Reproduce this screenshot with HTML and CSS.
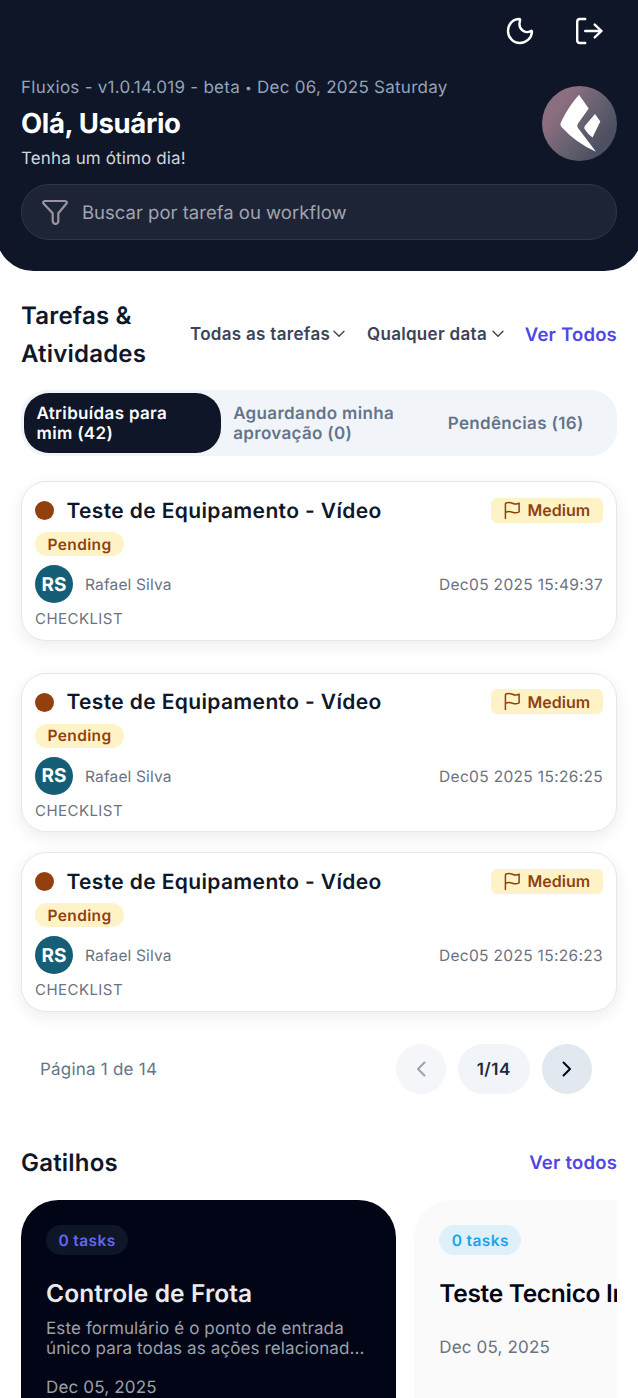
FILE: index.html
```html
<!DOCTYPE html>
<html lang="pt-BR">
<head>
<meta charset="utf-8">
<title>Fluxios</title>
<link rel="stylesheet" href="styles.css">
</head>
<body>
<svg class="defs" width="0" height="0">
  <defs>
    <symbol id="flag" viewBox="0 0 18 20"><path d="M1.500 18.500V3.200C1.500 2.300 3.500 1.500 5.300 1.500C8.200 1.500 9.500 3.200 12.200 3.200C13.700 3.200 14.700 2.600 16 2.200V11.400C14.700 12.200 13.700 12.500 12.200 12.500C9.500 12.500 8.200 11 5.300 11C3.700 11 2.500 11.500 1.500 12"/></symbol>
    <symbol id="down" viewBox="0 0 12 8"><path d="M1 1.200L6 6.200L11 1.200"/></symbol>
  </defs>
</svg>
<header class="hero">
  <nav class="actions">
    <svg class="moon" viewBox="0 0 30 30"><path d="M14.300 3C7.500 3 3 8.600 3 14.900C3 21.500 8.100 27 14.900 27C21.400 27 26.600 22 27 15.600C26.900 14.800 26.400 14.500 25.600 15C20 18.200 12.700 13.200 14.900 5.200C15.200 4.100 15.500 3.100 14.300 3Z"/></svg>
    <svg class="logout" viewBox="0 0 30 30"><path d="M11.200 3H6C4.200 3 3.200 4 3.200 5.800V24.200C3.200 26 4.200 27 6 27H11.200M11.200 15H27.500M20.700 8.600L27.500 15L20.700 21.400"/></svg>
  </nav>
  <div class="greeting">
    <div>
      <p class="meta">Fluxios - v1.0.14.019 - beta <span class="bullet">•</span> Dec 06, 2025 Saturday</p>
      <h1 class="hello">Olá, Usuário</h1>
      <p class="wish">Tenha um ótimo dia!</p>
    </div>
    <svg class="brand" viewBox="0 0 75 75">
      <defs><linearGradient id="g" x1="0.1" y1="0.15" x2="0.85" y2="0.7"><stop offset="0.2" stop-color="#8b6e80"/><stop offset="0.65" stop-color="#64606f"/><stop offset="1" stop-color="#4c5060"/></linearGradient></defs>
      <circle cx="37.500" cy="37.500" r="37.500" fill="url(#g)"/>
      <path fill="#fff" d="M37 8.700L46.700 22.400L36 37.500Q34.600 39.500 36 42L54 65.700Q34 57 19.500 41Q17.700 39 18.800 36.500Q26 21 37 8.700ZM53 28L58.300 35.500L50.500 51.500Q46 48.500 42.600 43Q41.700 41.800 42.800 40Z"/>
    </svg>
  </div>
  <label class="search">
    <svg viewBox="0 0 30 30"><path d="M5 4H25C26.800 4 27.500 5.500 26.300 6.800L18.300 16.200V24C18.300 26 16.800 27 15.300 26.800C13.600 26.500 12.700 25.500 12.700 24V16.200L3.700 6.800C2.500 5.500 3.200 4 5 4Z"/></svg>
    <span>Buscar por tarefa ou workflow</span>
  </label>
</header>
<main>
  <section class="tasks-head">
    <h2 class="heading">Tarefas &amp;<br>Atividades</h2>
    <button class="filter f1">Todas as tarefas<svg><use href="#down"/></svg></button>
    <button class="filter f2">Qualquer data<svg><use href="#down"/></svg></button>
    <a class="more">Ver Todos</a>
  </section>
  <div class="tabs">
    <div class="tab active">Atribuídas para<br>mim (42)</div>
    <div class="tab">Aguardando minha<br>aprovação (0)</div>
    <div class="tab centered">Pendências (16)</div>
  </div>
  <section class="list">
    <article class="card first">
      <div class="row title-row"><i class="dot"></i><h3>Teste de Equipamento - Vídeo</h3><span class="priority"><svg><use href="#flag"/></svg>Medium</span></div>
      <span class="status">Pending</span>
      <div class="row person"><b class="avatar">RS</b><span class="name">Rafael Silva</span><time>Dec05 2025 15:49:37</time></div>
      <p class="kind">CHECKLIST</p>
    </article>
    <article class="card">
      <div class="row title-row"><i class="dot"></i><h3>Teste de Equipamento - Vídeo</h3><span class="priority"><svg><use href="#flag"/></svg>Medium</span></div>
      <span class="status">Pending</span>
      <div class="row person"><b class="avatar">RS</b><span class="name">Rafael Silva</span><time>Dec05 2025 15:26:25</time></div>
      <p class="kind">CHECKLIST</p>
    </article>
    <article class="card">
      <div class="row title-row"><i class="dot"></i><h3>Teste de Equipamento - Vídeo</h3><span class="priority"><svg><use href="#flag"/></svg>Medium</span></div>
      <span class="status">Pending</span>
      <div class="row person"><b class="avatar">RS</b><span class="name">Rafael Silva</span><time>Dec05 2025 15:26:23</time></div>
      <p class="kind">CHECKLIST</p>
    </article>
  </section>
  <div class="pager">
    <span class="page-label">Página 1 de 14</span>
    <button class="step off"><svg viewBox="0 0 10 16"><path d="M8.500 1.500L2 8L8.500 14.500"/></svg></button>
    <span class="count">1/14</span>
    <button class="step"><svg viewBox="0 0 10 16"><path d="M1.500 1.500L8 8L1.500 14.500"/></svg></button>
  </div>
  <section class="triggers-head">
    <h2 class="heading">Gatilhos</h2>
    <a class="more">Ver todos</a>
  </section>
  <section class="triggers">
    <article class="trigger dark">
      <span class="badge">0 tasks</span>
      <h3>Controle de Frota</h3>
      <p class="desc">Este formulário é o ponto de entrada<br>único para todas as ações relacionad...</p>
      <p class="date">Dec 05, 2025</p>
    </article>
    <article class="trigger light">
      <span class="badge">0 tasks</span>
      <h3>Teste Tecnico In</h3>
      <p class="date">Dec 05, 2025</p>
    </article>
  </section>
</main>
</body>
</html>
```
FILE: styles.css
```css
* { box-sizing: border-box; margin: 0; padding: 0; }
html, body { width: 638px; height: 1398px; overflow: hidden; }
body { background: #fff; color: #0f172a; font-family: Inter, "Liberation Sans", sans-serif; text-rendering: geometricPrecision; }
svg { fill: none; stroke: currentColor; stroke-linecap: round; stroke-linejoin: round; flex: none; }
button { border: 0; background: none; font: inherit; color: inherit; }
.defs { position: absolute; }

.hero { height: 271px; margin: 0 -4px; padding: 0 25px; background: #0e1628; border-radius: 0 0 37.5px 37.5px; color: #fff; }
.actions { height: 75.5px; display: flex; justify-content: flex-end; gap: 38.500px; padding: 16px 13.500px 0 0; }
.actions svg { width: 30px; height: 30px; stroke-width: 2.4; }
.greeting { height: 96px; display: flex; justify-content: space-between; align-items: center; }
.meta { padding-top: 1px; font-size: 17px; line-height: 25px; letter-spacing: .26px; color: #94a3b8; white-space: nowrap; }
.bullet { font-size: 12px; vertical-align: 1px; line-height: 1; }
.hello { font-size: 27.500px; line-height: 44px; font-weight: 700; letter-spacing: -.35px; }
.wish { padding-top: 1px; font-size: 17px; line-height: 26px; letter-spacing: .12px; color: #d1d5db; }
.brand { width: 75px; height: 75px; stroke: none; }
.search { margin-top: 12.500px; height: 56px; padding-left: 18px; display: flex; align-items: center; gap: 12px; border: 1.500px solid #2f3748; border-radius: 28px; background: #1c2436; color: #a0a4b0; font-size: 18.500px; }
.search span { padding-top: 2px; }
.search svg { width: 30px; height: 30px; stroke-width: 2.200; color: #9a95a4; }

main { padding: 0 21px; }
.tasks-head { display: flex; align-items: center; height: 75px; margin-top: 26px; white-space: nowrap; }
.heading { font-size: 24px; line-height: 37.500px; font-weight: 600; letter-spacing: .2px; color: #0f172a; }
.tasks-head .heading { width: 169px; }
.filter { display: flex; align-items: center; justify-content: space-between; font-size: 17px; font-weight: 600; letter-spacing: .3px; color: #3b4458; padding-bottom: 1px; }
.filter svg { width: 12px; height: 8px; stroke-width: 1.400; }
.f1 { width: 155px; margin-right: 22px; }
.f2 { width: 137px; }
.more { margin-left: auto; font-size: 18.500px; font-weight: 600; letter-spacing: .2px; color: #4f46e5; }

.tabs { display: grid; grid-template-columns: repeat(3, 1fr); height: 66px; margin-top: 18px; padding: 3px; border-radius: 26px; background: #f1f5f9; white-space: nowrap; }
.tab { height: 60px; display: flex; align-items: center; padding: 2px 0 0 12.500px; border-radius: 25px; font-size: 17px; line-height: 20px; font-weight: 600; letter-spacing: .33px; color: #64748b; }
.tab.active { height: 59.500px; background: #0e1628; color: #fff; }
.tab.centered { padding: 2px 0 0; justify-content: center; }

.list { display: flex; flex-direction: column; gap: 20px; margin-top: 25px; }
.card { height: 159.500px; padding: 13px 13px 0; border: 1.500px solid #e5e7eb; border-radius: 25px; background: #fff; box-shadow: 0 5px 16px rgba(15, 23, 42, .08); }
.card.first { margin-bottom: 12px; }
.row { display: flex; align-items: center; white-space: nowrap; }
.title-row { height: 31px; }
.dot { width: 19px; height: 19px; border-radius: 50%; background: #92400e; margin-right: 12.500px; }
.card h3 { padding-top: 1.500px; font-size: 21px; font-weight: 600; letter-spacing: .36px; }
.priority { margin: -1px 0 0 auto; width: 112.500px; height: 25px; display: flex; align-items: center; gap: 7px; padding-left: 13px; border-radius: 6px; background: #fef3c7; color: #92400e; font-size: 16px; font-weight: 600; }
.priority svg { width: 17px; height: 19px; stroke-width: 1.600; }
.status { display: flex; width: 89px; height: 24px; margin-top: 6px; align-items: center; justify-content: center; border-radius: 12px; background: #fef3c7; color: #92400e; font-size: 15.500px; font-weight: 600; letter-spacing: .35px; }
.person { height: 38px; margin-top: 9px; color: #6b7280; font-size: 15.500px; letter-spacing: .15px; }
.avatar { width: 38px; height: 38px; border-radius: 50%; background: #155e75; color: #fff; display: flex; align-items: center; justify-content: center; font-size: 19px; font-weight: 700; letter-spacing: 0; margin-right: 12px; }
.person time { margin-left: auto; letter-spacing: .33px; }
.name, .person time { padding-top: 1px; }
.kind { margin-top: 6px; font-size: 15px; line-height: 20px; letter-spacing: .45px; color: #6b7280; }

.pager { height: 50px; margin: 32px 25px 0 19px; display: flex; align-items: center; gap: 12.500px; }
.page-label { margin-right: auto; padding-top: 2px; font-size: 17px; letter-spacing: .22px; color: #64748b; }
.step { width: 50px; height: 50px; border-radius: 50%; display: flex; align-items: center; justify-content: center; background: #e2e8f0; color: #020617; }
.step svg { width: 10px; height: 16px; stroke-width: 2; }
.step.off { background: #f4f6f9; color: #9ba3af; }
.count { width: 71.500px; height: 50px; padding-top: 2px; border-radius: 25px; display: flex; align-items: center; justify-content: center; background: #f1f5f9; color: #1e293b; font-size: 17px; font-weight: 600; letter-spacing: .5px; }
.triggers-head { height: 38px; margin-top: 50px; display: flex; justify-content: space-between; align-items: center; }
.triggers { margin-top: 18px; display: flex; gap: 18.750px; overflow: hidden; height: 198px; white-space: nowrap; }
.trigger { width: 374.500px; height: 240px; flex: none; padding: 25px; border-radius: 37.500px; }
.dark { background: #020515; color: #e8eaee; }
.light { background: #fafafa; color: #020617; }
.badge { display: flex; width: 82px; height: 30px; padding-top: 2px; align-items: center; justify-content: center; border-radius: 15px; font-size: 15.500px; font-weight: 600; letter-spacing: .4px; }
.dark .badge { background: #0e1628; color: #6366f1; }
.light .badge { background: #e0f0fa; color: #1ba5e9; }
.trigger h3 { margin-top: 21px; font-size: 24.500px; line-height: 34px; font-weight: 600; letter-spacing: .1px; }
.trigger.light h3 { letter-spacing: -.3px; }
.desc { margin-top: 9px; font-size: 17px; line-height: 20px; letter-spacing: .12px; color: #9ca0aa; }
.date { margin-top: 19px; font-size: 17px; line-height: 20px; letter-spacing: .16px; color: #9ca0aa; }
.light .date { margin-top: 28px; color: #6b7280; }
```
